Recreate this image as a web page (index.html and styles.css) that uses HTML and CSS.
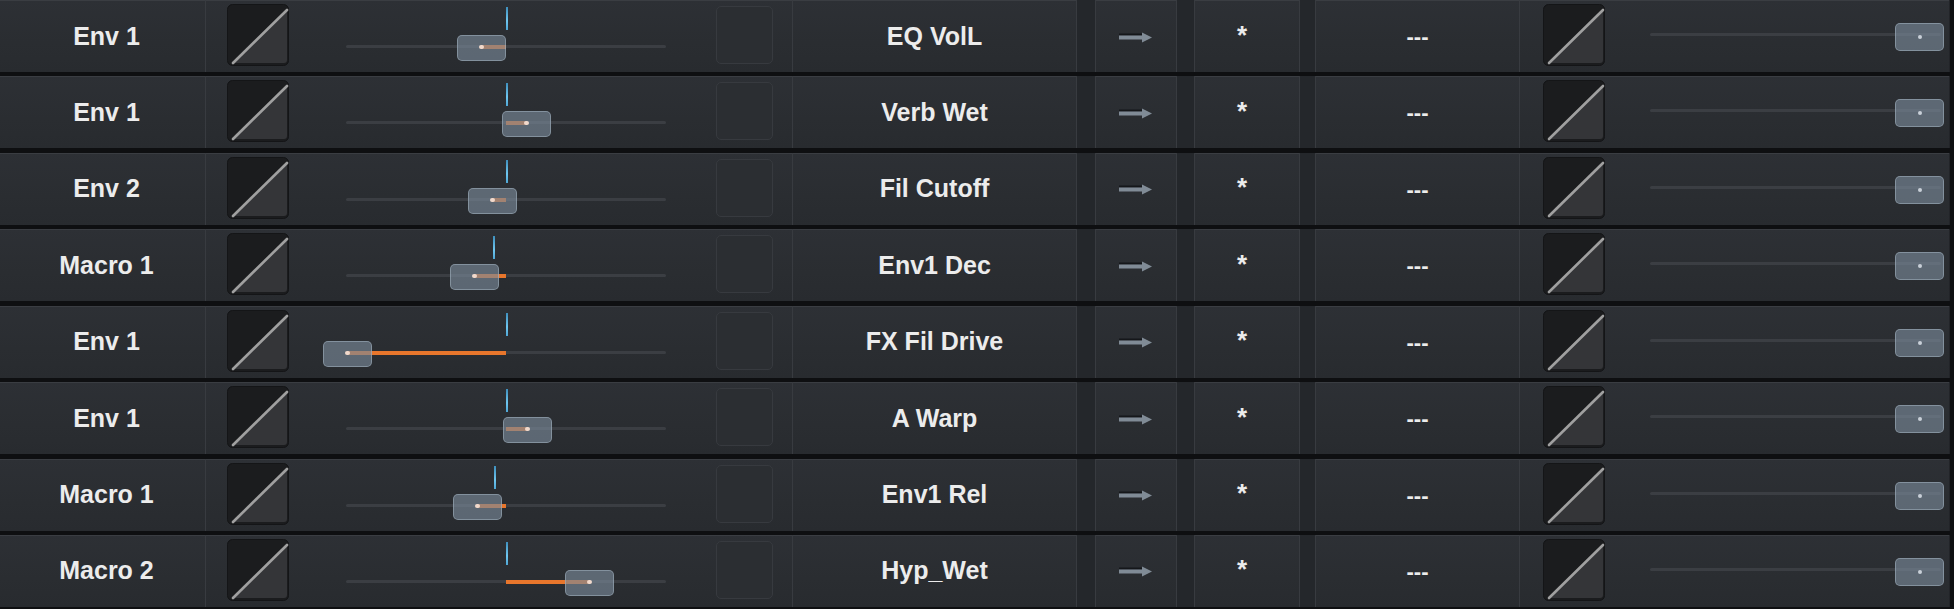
FILE: index.html
```html
<!DOCTYPE html>
<html>
<head>
<meta charset="utf-8">
<link rel="stylesheet" href="styles.css">
</head>
<body>
<div class="matrix">
  <div class="row">
    <div class="c-src">Env 1</div>
    <div class="c-mod">
      <svg class="curve" viewBox="0 0 62 62"><defs><linearGradient id="g1" x1="0" y1="0" x2="0" y2="1"><stop offset="0" stop-color="#3c3d40"/><stop offset="1" stop-color="#2a2b2e"/></linearGradient></defs><rect class="cbg" x="0.5" y="0.5" width="61" height="61" rx="5"/><path class="ctri" d="M6 59 L60 6 L60 56 Q60 59 57 59 Z"/><path class="cline" d="M6 59 L60 6"/></svg>
      <div class="slider">
        <div class="track"></div>
        <div class="tick" style="left:161px"></div>
        <div class="amt" style="left:136px;width:24px"></div>
        <div class="thumb" style="left:111px"><i></i></div>
      </div>
      <div class="aux"></div>
    </div>
    <div class="c-dst">EQ VolL</div>
    <div class="band"></div>
    <div class="c-arr"><svg viewBox="0 0 34 14"><path class="ash" d="M0 4.5 H24"/><path class="ab" d="M0 7.5 H25"/><path class="ah" d="M23 2.5 L33 7.5 L23 12.5 Z"/></svg></div>
    <div class="band b2"></div>
    <div class="c-ast">*</div>
    <div class="band b3"></div>
    <div class="c-aux">---</div>
    <div class="c-out">
      <svg class="curve" viewBox="0 0 62 62"><rect class="cbg" x="0.5" y="0.5" width="61" height="61" rx="5"/><path class="ctri" d="M6 59 L60 6 L60 56 Q60 59 57 59 Z"/><path class="cline" d="M6 59 L60 6"/></svg>
      <div class="oslider"><div class="otrack"></div><div class="othumb"><i></i></div></div>
    </div>
  </div>

  <div class="row">
    <div class="c-src">Env 1</div>
    <div class="c-mod">
      <svg class="curve" viewBox="0 0 62 62"><rect class="cbg" x="0.5" y="0.5" width="61" height="61" rx="5"/><path class="ctri" d="M6 59 L60 6 L60 56 Q60 59 57 59 Z"/><path class="cline" d="M6 59 L60 6"/></svg>
      <div class="slider">
        <div class="track"></div>
        <div class="tick" style="left:161px"></div>
        <div class="amt" style="left:160px;width:21px"></div>
        <div class="thumb" style="left:156px"><i></i></div>
      </div>
      <div class="aux"></div>
    </div>
    <div class="c-dst">Verb Wet</div>
    <div class="band"></div>
    <div class="c-arr"><svg viewBox="0 0 34 14"><path class="ash" d="M0 4.5 H24"/><path class="ab" d="M0 7.5 H25"/><path class="ah" d="M23 2.5 L33 7.5 L23 12.5 Z"/></svg></div>
    <div class="band b2"></div>
    <div class="c-ast">*</div>
    <div class="band b3"></div>
    <div class="c-aux">---</div>
    <div class="c-out">
      <svg class="curve" viewBox="0 0 62 62"><rect class="cbg" x="0.5" y="0.5" width="61" height="61" rx="5"/><path class="ctri" d="M6 59 L60 6 L60 56 Q60 59 57 59 Z"/><path class="cline" d="M6 59 L60 6"/></svg>
      <div class="oslider"><div class="otrack"></div><div class="othumb"><i></i></div></div>
    </div>
  </div>

  <div class="row">
    <div class="c-src">Env 2</div>
    <div class="c-mod">
      <svg class="curve" viewBox="0 0 62 62"><rect class="cbg" x="0.5" y="0.5" width="61" height="61" rx="5"/><path class="ctri" d="M6 59 L60 6 L60 56 Q60 59 57 59 Z"/><path class="cline" d="M6 59 L60 6"/></svg>
      <div class="slider">
        <div class="track"></div>
        <div class="tick" style="left:161px"></div>
        <div class="amt" style="left:147px;width:13px"></div>
        <div class="thumb" style="left:122px"><i></i></div>
      </div>
      <div class="aux"></div>
    </div>
    <div class="c-dst">Fil Cutoff</div>
    <div class="band"></div>
    <div class="c-arr"><svg viewBox="0 0 34 14"><path class="ash" d="M0 4.5 H24"/><path class="ab" d="M0 7.5 H25"/><path class="ah" d="M23 2.5 L33 7.5 L23 12.5 Z"/></svg></div>
    <div class="band b2"></div>
    <div class="c-ast">*</div>
    <div class="band b3"></div>
    <div class="c-aux">---</div>
    <div class="c-out">
      <svg class="curve" viewBox="0 0 62 62"><rect class="cbg" x="0.5" y="0.5" width="61" height="61" rx="5"/><path class="ctri" d="M6 59 L60 6 L60 56 Q60 59 57 59 Z"/><path class="cline" d="M6 59 L60 6"/></svg>
      <div class="oslider"><div class="otrack"></div><div class="othumb"><i></i></div></div>
    </div>
  </div>

  <div class="row">
    <div class="c-src">Macro 1</div>
    <div class="c-mod">
      <svg class="curve" viewBox="0 0 62 62"><rect class="cbg" x="0.5" y="0.5" width="61" height="61" rx="5"/><path class="ctri" d="M6 59 L60 6 L60 56 Q60 59 57 59 Z"/><path class="cline" d="M6 59 L60 6"/></svg>
      <div class="slider">
        <div class="track"></div>
        <div class="tick" style="left:148px"></div>
        <div class="amt" style="left:129px;width:31px"></div>
        <div class="thumb" style="left:104px"><i></i></div>
      </div>
      <div class="aux"></div>
    </div>
    <div class="c-dst">Env1 Dec</div>
    <div class="band"></div>
    <div class="c-arr"><svg viewBox="0 0 34 14"><path class="ash" d="M0 4.5 H24"/><path class="ab" d="M0 7.5 H25"/><path class="ah" d="M23 2.5 L33 7.5 L23 12.5 Z"/></svg></div>
    <div class="band b2"></div>
    <div class="c-ast">*</div>
    <div class="band b3"></div>
    <div class="c-aux">---</div>
    <div class="c-out">
      <svg class="curve" viewBox="0 0 62 62"><rect class="cbg" x="0.5" y="0.5" width="61" height="61" rx="5"/><path class="ctri" d="M6 59 L60 6 L60 56 Q60 59 57 59 Z"/><path class="cline" d="M6 59 L60 6"/></svg>
      <div class="oslider"><div class="otrack"></div><div class="othumb"><i></i></div></div>
    </div>
  </div>

  <div class="row">
    <div class="c-src">Env 1</div>
    <div class="c-mod">
      <svg class="curve" viewBox="0 0 62 62"><rect class="cbg" x="0.5" y="0.5" width="61" height="61" rx="5"/><path class="ctri" d="M6 59 L60 6 L60 56 Q60 59 57 59 Z"/><path class="cline" d="M6 59 L60 6"/></svg>
      <div class="slider">
        <div class="track"></div>
        <div class="tick" style="left:161px"></div>
        <div class="amt" style="left:1px;width:159px"></div>
        <div class="thumb" style="left:-23px"><i></i></div>
      </div>
      <div class="aux"></div>
    </div>
    <div class="c-dst">FX Fil Drive</div>
    <div class="band"></div>
    <div class="c-arr"><svg viewBox="0 0 34 14"><path class="ash" d="M0 4.5 H24"/><path class="ab" d="M0 7.5 H25"/><path class="ah" d="M23 2.5 L33 7.5 L23 12.5 Z"/></svg></div>
    <div class="band b2"></div>
    <div class="c-ast">*</div>
    <div class="band b3"></div>
    <div class="c-aux">---</div>
    <div class="c-out">
      <svg class="curve" viewBox="0 0 62 62"><rect class="cbg" x="0.5" y="0.5" width="61" height="61" rx="5"/><path class="ctri" d="M6 59 L60 6 L60 56 Q60 59 57 59 Z"/><path class="cline" d="M6 59 L60 6"/></svg>
      <div class="oslider"><div class="otrack"></div><div class="othumb"><i></i></div></div>
    </div>
  </div>

  <div class="row">
    <div class="c-src">Env 1</div>
    <div class="c-mod">
      <svg class="curve" viewBox="0 0 62 62"><rect class="cbg" x="0.5" y="0.5" width="61" height="61" rx="5"/><path class="ctri" d="M6 59 L60 6 L60 56 Q60 59 57 59 Z"/><path class="cline" d="M6 59 L60 6"/></svg>
      <div class="slider">
        <div class="track"></div>
        <div class="tick" style="left:161px"></div>
        <div class="amt" style="left:160px;width:22px"></div>
        <div class="thumb" style="left:157px"><i></i></div>
      </div>
      <div class="aux"></div>
    </div>
    <div class="c-dst">A Warp</div>
    <div class="band"></div>
    <div class="c-arr"><svg viewBox="0 0 34 14"><path class="ash" d="M0 4.5 H24"/><path class="ab" d="M0 7.5 H25"/><path class="ah" d="M23 2.5 L33 7.5 L23 12.5 Z"/></svg></div>
    <div class="band b2"></div>
    <div class="c-ast">*</div>
    <div class="band b3"></div>
    <div class="c-aux">---</div>
    <div class="c-out">
      <svg class="curve" viewBox="0 0 62 62"><rect class="cbg" x="0.5" y="0.5" width="61" height="61" rx="5"/><path class="ctri" d="M6 59 L60 6 L60 56 Q60 59 57 59 Z"/><path class="cline" d="M6 59 L60 6"/></svg>
      <div class="oslider"><div class="otrack"></div><div class="othumb"><i></i></div></div>
    </div>
  </div>

  <div class="row">
    <div class="c-src">Macro 1</div>
    <div class="c-mod">
      <svg class="curve" viewBox="0 0 62 62"><rect class="cbg" x="0.5" y="0.5" width="61" height="61" rx="5"/><path class="ctri" d="M6 59 L60 6 L60 56 Q60 59 57 59 Z"/><path class="cline" d="M6 59 L60 6"/></svg>
      <div class="slider">
        <div class="track"></div>
        <div class="tick" style="left:149px"></div>
        <div class="amt" style="left:132px;width:28px"></div>
        <div class="thumb" style="left:107px"><i></i></div>
      </div>
      <div class="aux"></div>
    </div>
    <div class="c-dst">Env1 Rel</div>
    <div class="band"></div>
    <div class="c-arr"><svg viewBox="0 0 34 14"><path class="ash" d="M0 4.5 H24"/><path class="ab" d="M0 7.5 H25"/><path class="ah" d="M23 2.5 L33 7.5 L23 12.5 Z"/></svg></div>
    <div class="band b2"></div>
    <div class="c-ast">*</div>
    <div class="band b3"></div>
    <div class="c-aux">---</div>
    <div class="c-out">
      <svg class="curve" viewBox="0 0 62 62"><rect class="cbg" x="0.5" y="0.5" width="61" height="61" rx="5"/><path class="ctri" d="M6 59 L60 6 L60 56 Q60 59 57 59 Z"/><path class="cline" d="M6 59 L60 6"/></svg>
      <div class="oslider"><div class="otrack"></div><div class="othumb"><i></i></div></div>
    </div>
  </div>

  <div class="row">
    <div class="c-src">Macro 2</div>
    <div class="c-mod">
      <svg class="curve" viewBox="0 0 62 62"><rect class="cbg" x="0.5" y="0.5" width="61" height="61" rx="5"/><path class="ctri" d="M6 59 L60 6 L60 56 Q60 59 57 59 Z"/><path class="cline" d="M6 59 L60 6"/></svg>
      <div class="slider">
        <div class="track"></div>
        <div class="tick" style="left:161px"></div>
        <div class="amt" style="left:160px;width:84px"></div>
        <div class="thumb" style="left:219px"><i></i></div>
      </div>
      <div class="aux"></div>
    </div>
    <div class="c-dst">Hyp_Wet</div>
    <div class="band"></div>
    <div class="c-arr"><svg viewBox="0 0 34 14"><path class="ash" d="M0 4.5 H24"/><path class="ab" d="M0 7.5 H25"/><path class="ah" d="M23 2.5 L33 7.5 L23 12.5 Z"/></svg></div>
    <div class="band b2"></div>
    <div class="c-ast">*</div>
    <div class="band b3"></div>
    <div class="c-aux">---</div>
    <div class="c-out">
      <svg class="curve" viewBox="0 0 62 62"><rect class="cbg" x="0.5" y="0.5" width="61" height="61" rx="5"/><path class="ctri" d="M6 59 L60 6 L60 56 Q60 59 57 59 Z"/><path class="cline" d="M6 59 L60 6"/></svg>
      <div class="oslider"><div class="otrack"></div><div class="othumb"><i></i></div></div>
    </div>
  </div>
</div>
</body>
</html>
```

FILE: styles.css
```css
html, body {
  margin: 0;
  padding: 0;
  background: #0e0f11;
  overflow: hidden;
}
body {
  width: 1954px;
  height: 609px;
  font-family: "Liberation Sans", Arial, sans-serif;
  font-weight: 700;
  color: #ececec;
}
.matrix {
  display: grid;
  grid-auto-rows: 72px;
  row-gap: 4.43px;
  padding-right: 4px;
}
.row {
  display: flex;
  align-items: stretch;
  background: linear-gradient(180deg, #2d3035 0%, #2a2d31 60%, #282b2f 100%);
  box-shadow: inset 0 1px 0 #3a3d42;
}
.c-src {
  width: 206px;
  flex: none;
  display: flex;
  align-items: center;
  justify-content: center;
  font-size: 25px;
  border-right: 1px solid #383b40;
  padding-left: 8px;
  box-sizing: border-box;
}
.c-mod {
  width: 587px;
  flex: none;
  display: flex;
  align-items: flex-start;
  padding: 4px 19px 0 21px;
  box-sizing: border-box;
  border-right: 1px solid #383b40;
}
.curve {
  width: 62px;
  height: 62px;
  flex: none;
  display: block;
}
.cbg { fill: #1b1c1e; stroke: #141517; stroke-width: 1; }
.ctri { fill: #343538; }
.cline { stroke: #a0a0a0; stroke-width: 2.6; stroke-linecap: round; fill: none; }
.slider {
  position: relative;
  width: 427px;
  height: 62px;
  flex: none;
}
.track {
  position: absolute;
  left: 57px;
  width: 320px;
  top: 41px;
  height: 3px;
  background: #3b3e43;
  border-radius: 2px;
}
.tick {
  position: absolute;
  top: 3px;
  margin-left: 56px;
  width: 2px;
  height: 23px;
  background: linear-gradient(180deg, #3e8fbd, #6fc6ef 60%, #4ea7d6);
}
.amt {
  position: absolute;
  top: 41px;
  margin-left: 57px;
  height: 4px;
  background: #e8762c;
}
.thumb {
  position: absolute;
  top: 31px;
  margin-left: 57px;
  width: 49px;
  height: 26px;
  box-sizing: border-box;
  border-radius: 5px;
  background: rgba(122, 138, 154, 0.64);
  border: 1px solid rgba(170, 185, 200, 0.5);
}
.thumb i {
  position: absolute;
  left: 21px;
  top: 9px;
  width: 5px;
  height: 4px;
  background: #f1d9cb;
  border-radius: 2px;
}
.aux {
  width: 57px;
  height: 58px;
  margin-top: 2px;
  flex: none;
  box-sizing: border-box;
  border: 1px solid #373a3f;
  border-radius: 5px;
  background: #2b2e32;
}
.c-dst {
  width: 283px;
  flex: none;
  display: flex;
  align-items: center;
  justify-content: center;
  font-size: 25px;
}
.band {
  width: 20px;
  flex: none;
  box-sizing: border-box;
  background: #24272b;
  border-left: 1px solid #383b40;
  border-right: 1px solid #383b40;
}
.band.b2 { width: 19px; }
.band.b3 { width: 17px; }
.c-arr {
  width: 80px;
  flex: none;
  display: flex;
  align-items: center;
  justify-content: center;
  padding-top: 1px;
  box-sizing: border-box;
}
.c-arr svg { width: 34px; height: 14px; display: block; }
.ash { stroke: #15171a; stroke-width: 2; fill: none; }
.ab { stroke: #808b96; stroke-width: 4; fill: none; }
.ah { fill: #808b96; }
.c-ast {
  width: 104px;
  flex: none;
  display: flex;
  align-items: center;
  justify-content: center;
  padding-right: 10px;
  box-sizing: border-box;
  font-size: 26px;
  padding-bottom: 2px;
}
.c-aux {
  width: 204px;
  flex: none;
  display: flex;
  align-items: center;
  justify-content: center;
  font-size: 22px;
  border-right: 1px solid #383b40;
  padding-top: 2px;
  box-sizing: border-box;
}
.c-out {
  flex: 1;
  display: flex;
  align-items: flex-start;
  padding: 4px 0 0 23px;
  border-right: 1px solid #222428;
}
.oslider {
  position: relative;
  flex: 1;
  height: 62px;
}
.otrack {
  position: absolute;
  left: 45px;
  right: 8px;
  top: 29px;
  height: 3px;
  border-radius: 2px;
  background: #3b3e43;
}
.othumb {
  position: absolute;
  right: 5px;
  top: 19px;
  width: 49px;
  height: 28px;
  box-sizing: border-box;
  border-radius: 5px;
  background: rgba(122, 138, 154, 0.64);
  border: 1px solid rgba(170, 185, 200, 0.5);
}
.othumb i {
  position: absolute;
  left: 22px;
  top: 11px;
  width: 4px;
  height: 4px;
  background: #c9d0d8;
  border-radius: 2px;
}
```
